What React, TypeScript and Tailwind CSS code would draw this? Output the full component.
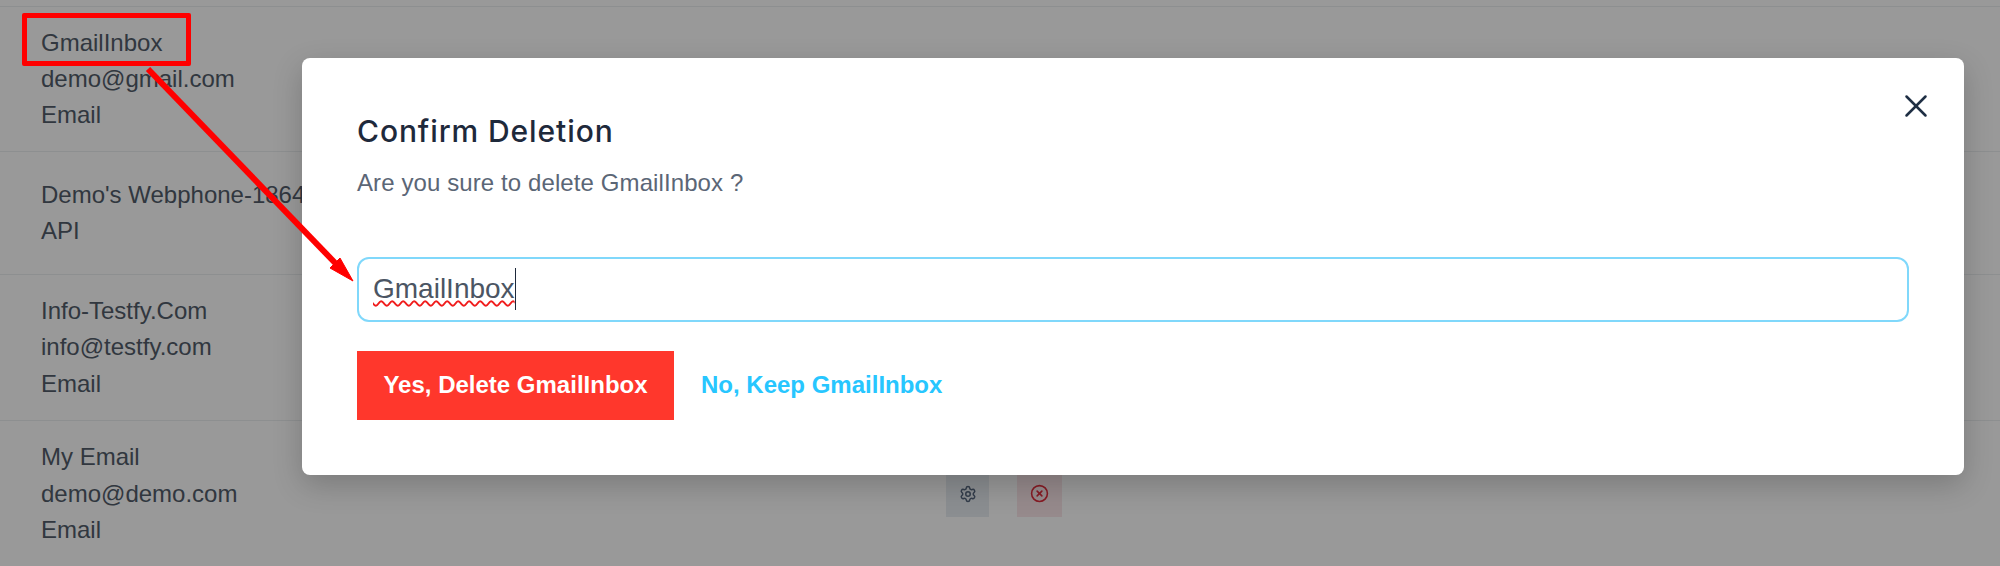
import { CircleX, Settings, X } from "lucide-react";

const rows = [
  { lines: ["GmailInbox", "demo@gmail.com", "Email"], pad: "py-[17.5px]" },
  { lines: ["Demo's Webphone-1864", "API"], pad: "py-[24.5px]" },
  { lines: ["Info-Testfy.Com", "info@testfy.com", "Email"], pad: "py-[18px]" },
  { lines: ["My Email", "demo@demo.com", "Email"], pad: "py-[18px]", actions: true },
];

function Row({ lines, pad, actions }: { lines: string[]; pad: string; actions?: boolean }) {
  return (
    <div className={`flex items-center border-b border-[#eceef1] pl-[41px] last:border-b-0 ${pad}`}>
      <div className="w-[905px] shrink-0 text-[24px] leading-[36.4px] text-[#525c6a]">
        {lines.map((line) => (
          <div key={line}>{line}</div>
        ))}
      </div>
      {actions && (
        <div className="flex gap-[28px]">
          <div className="flex h-[46px] w-[43px] items-center justify-center bg-[#e8edf2] text-[#56677d]">
            <Settings size={18} strokeWidth={2} />
          </div>
          <div className="flex h-[46px] w-[45px] items-center justify-center bg-[#fbe6e9] text-[#e02d3c]">
            <CircleX size={19} strokeWidth={2} />
          </div>
        </div>
      )}
    </div>
  );
}

export default function App() {
  return (
    <div className="relative h-[566px] w-[2000px] overflow-hidden bg-white font-['Liberation_Sans',sans-serif]">
      <div className="pt-[6px]">
        <div className="border-t border-[#eceef1]">
          {rows.map((row) => (
            <Row key={row.lines[0]} {...row} />
          ))}
        </div>
      </div>

      <div className="absolute inset-0 bg-black/40" />

      <div className="absolute left-[302px] top-[58px] h-[417px] w-[1662px] rounded-[8px] bg-white px-[55px] pt-[54px] shadow-[0_10px_30px_rgba(0,0,0,0.2)]">
        <button className="absolute right-[29px] top-[29px] text-[#1f2f44]">
          <X size={38} strokeWidth={1.6} />
        </button>
        <h2 className="font-['Inter',sans-serif] text-[30px] font-medium leading-[38px] tracking-[0.9px] text-[#1e293b]">
          Confirm Deletion
        </h2>
        <p className="mt-[17px] text-[24px] leading-[32px] tracking-[0.1px] text-[#5b6676]">
          Are you sure to delete GmailInbox ?
        </p>
        <div className="mt-[57.5px] flex h-[65px] items-center rounded-[12px] border-2 border-[#80d8fb] px-[14px] text-[28px] text-[#4b5563]">
          <span className="border-r border-[#1e293b] underline decoration-[#f01c1c] decoration-wavy decoration-2 underline-offset-[2px]">
            GmailInbox
          </span>
        </div>
        <div className="mt-[29px] flex items-center gap-[27px]">
          <button className="h-[69px] w-[317px] bg-[#ff372c] text-[24px] font-bold whitespace-nowrap text-white">
            Yes, Delete GmailInbox
          </button>
          <button className="text-[24px] font-bold text-[#27c6ff]">No, Keep GmailInbox</button>
        </div>
      </div>

      <div className="absolute left-[22px] top-[13px] h-[53px] w-[169px] rounded-[2px] border-[5px] border-[#ff0000]" />
      <svg className="absolute inset-0" width="2000" height="566" viewBox="0 0 2000 566" fill="none">
        <path d="M148 69 L340 268" stroke="#ff0000" strokeWidth="6" />
        <path d="M353 281 L330 268 L340 258 Z" fill="#ff0000" stroke="#ff0000" strokeWidth="1" />
      </svg>
    </div>
  );
}
